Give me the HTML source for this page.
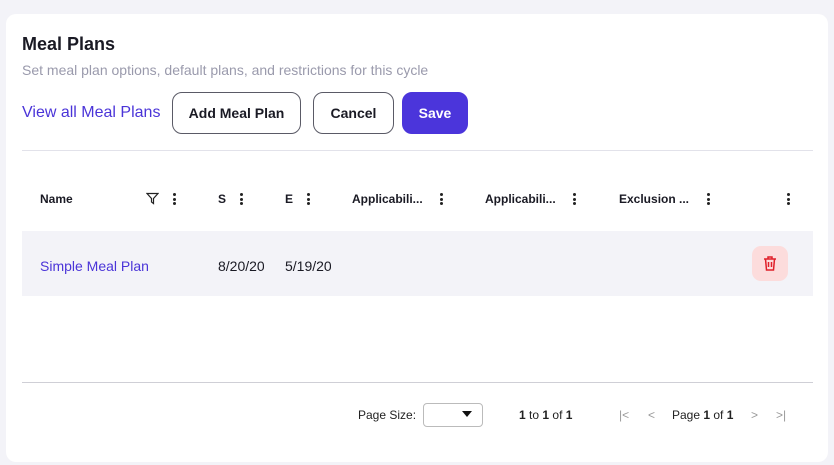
<!DOCTYPE html>
<html><head><style>
*{box-sizing:border-box;margin:0;padding:0}
body{width:834px;height:465px;background:#f3f3f8;font-family:"Liberation Sans",sans-serif;position:relative;overflow:hidden;color:#1a1a24}
.card{position:absolute;left:6px;top:14px;width:822px;height:448px;background:#fff;border-radius:10px}
.a{position:absolute;white-space:nowrap}
.btn{position:absolute;top:92px;height:42px;border:1px solid #5a5a66;border-radius:10px;font-size:14px;font-weight:bold;display:flex;align-items:center;justify-content:center;background:#fff}
.h{font-size:12px;font-weight:bold;top:192px}
.dots{position:absolute;top:193px;width:3px}
.dots i{display:block;width:3px;height:3px;border-radius:50%;background:#222;margin-bottom:1.5px}
.pg{font-size:12px;top:408px;color:#222}
</style></head><body>
<div class="card"></div>
<div class="a" style="left:22px;top:34px;font-size:18px;font-weight:bold">Meal Plans</div>
<div class="a" style="left:22px;top:62px;font-size:14px;color:#9a9aac">Set meal plan options, default plans, and restrictions for this cycle</div>
<div class="a" style="left:22px;top:104px;font-size:16px;color:#4a34d8">View all Meal Plans</div>
<div class="btn" style="left:172px;width:129px">Add Meal Plan</div>
<div class="btn" style="left:313px;width:81px">Cancel</div>
<div class="btn" style="left:402px;width:66px;background:#4b35db;border-color:#4b35db;color:#fff">Save</div>
<div class="a" style="left:22px;top:150px;width:791px;height:1px;background:#e2e2ea"></div>
<div class="a h" style="left:40px">Name</div>
<svg class="a" style="left:146px;top:192px" width="13" height="13" viewBox="0 0 13 13"><path d="M1 1.5h11L7.5 6.5v5L5.5 10V6.5z" fill="none" stroke="#222" stroke-width="1.2"/></svg>
<div class="dots" style="left:173px"><i></i><i></i><i></i></div>
<div class="a h" style="left:218px">S</div><div class="dots" style="left:240px"><i></i><i></i><i></i></div>
<div class="a h" style="left:285px">E</div><div class="dots" style="left:307px"><i></i><i></i><i></i></div>
<div class="a h" style="left:352px">Applicabili...</div><div class="dots" style="left:440px"><i></i><i></i><i></i></div>
<div class="a h" style="left:485px">Applicabili...</div><div class="dots" style="left:573px"><i></i><i></i><i></i></div>
<div class="a h" style="left:619px">Exclusion ...</div><div class="dots" style="left:707px"><i></i><i></i><i></i></div>
<div class="dots" style="left:787px"><i></i><i></i><i></i></div>
<div class="a" style="left:22px;top:231px;width:791px;height:65px;background:#f3f3f8"></div>
<div class="a" style="left:40px;top:258px;font-size:14px;color:#4a34d8">Simple Meal Plan</div>
<div class="a" style="left:218px;top:258px;font-size:14px;width:46px;overflow:hidden">8/20/20</div>
<div class="a" style="left:285px;top:258px;font-size:14px;width:46px;overflow:hidden">5/19/20</div>
<div class="a" style="left:752px;top:246px;width:36px;height:35px;border-radius:9px;background:#fcdcdc"></div>
<svg class="a" style="left:762px;top:255px" width="16" height="17" viewBox="0 0 16 17"><path d="M2 4h12M6 4V2h4v2M3.5 4l1 11h7l1-11M6.5 7v5M9.5 7v5" fill="none" stroke="#e0202a" stroke-width="1.5"/></svg>
<div class="a" style="left:22px;top:382px;width:791px;height:1px;background:#cfcfd6"></div>
<div class="a pg" style="left:358px">Page Size:</div>
<div class="a" style="left:423px;top:403px;width:60px;height:24px;border:1px solid #bbb;border-radius:4px"></div>
<div class="a" style="left:462px;top:411px;width:0;height:0;border-left:5px solid transparent;border-right:5px solid transparent;border-top:6px solid #111"></div>
<div class="a pg" style="left:519px"><b>1</b> to <b>1</b> of <b>1</b></div>
<div class="a pg" style="left:619px;color:#999">|&lt;</div>
<div class="a pg" style="left:648px;color:#999">&lt;</div>
<div class="a pg" style="left:672px">Page <b>1</b> of <b>1</b></div>
<div class="a pg" style="left:751px;color:#999">&gt;</div>
<div class="a pg" style="left:776px;color:#999">&gt;|</div>
</body></html>
